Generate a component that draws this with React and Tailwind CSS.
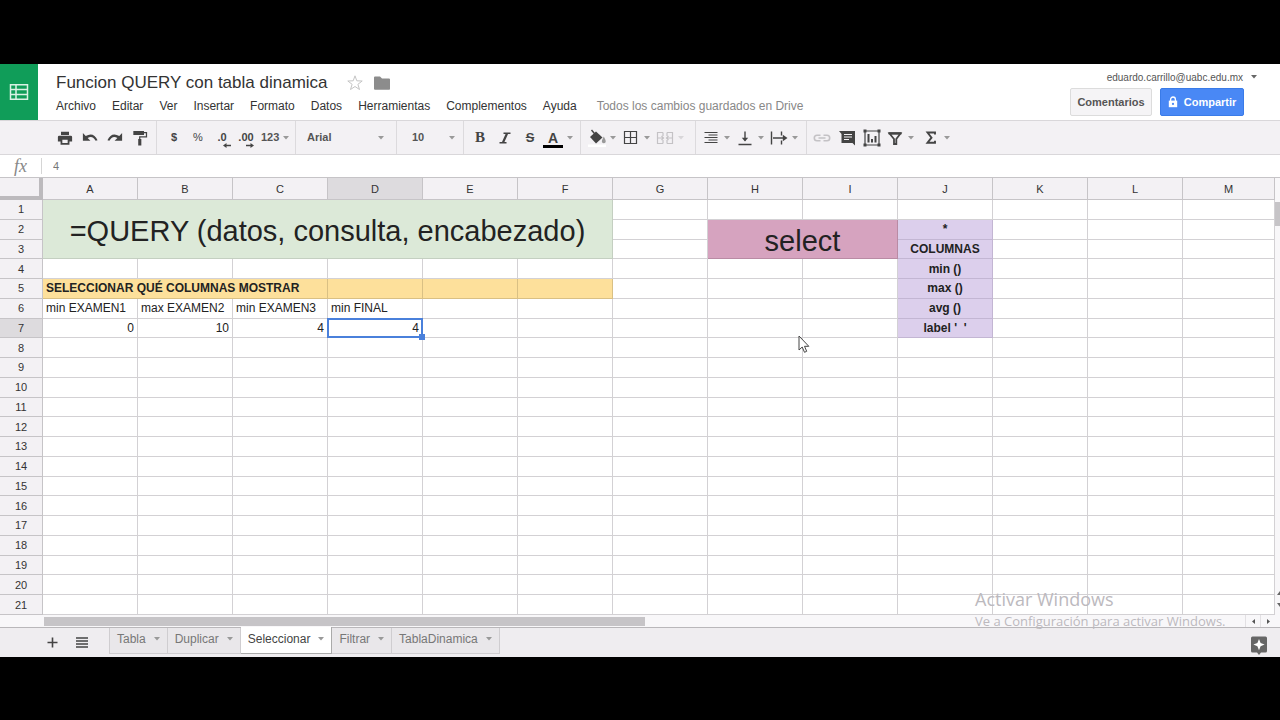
import { useState } from 'react';

const MENUS = ['Archivo', 'Editar', 'Ver', 'Insertar', 'Formato', 'Datos', 'Herramientas', 'Complementos', 'Ayuda'];
const COLS = ['A', 'B', 'C', 'D', 'E', 'F', 'G', 'H', 'I', 'J', 'K', 'L', 'M'];
const ROWS = Array.from({ length: 21 }, (_, i) => i + 1);
const SHEETS = ['Tabla', 'Duplicar', 'Seleccionar', 'Filtrar', 'TablaDinamica'];

const PURPLE = 'bg-[#dccfec] border-[#c3b6d3] text-center font-bold';
const ORANGE = 'bg-[#fde09b] border-[#d9c084]';

// cells that hold something, keyed by address
const CELLS = {
  A1: { text: '=QUERY (datos, consulta, encabezado)', colSpan: 6, rowSpan: 3, cls: 'bg-[#dce9d8] border-[#c4cfc1] pt-1 text-center text-[29px] leading-7' },
  H2: { text: 'select', colSpan: 2, rowSpan: 2, cls: 'bg-[#d6a3bf] border-[#b98ba4] pt-1 text-center text-[29px] leading-7' },
  J2: { text: '*', cls: PURPLE },
  J3: { text: 'COLUMNAS', cls: PURPLE },
  J4: { text: 'min ()', cls: PURPLE },
  J5: { text: 'max ()', cls: PURPLE },
  J6: { text: 'avg ()', cls: PURPLE },
  J7: { text: "label '  '", cls: PURPLE },
  A5: { text: 'SELECCIONAR QUÉ COLUMNAS MOSTRAR', colSpan: 3, cls: `${ORANGE} font-bold` },
  D5: { cls: ORANGE },
  E5: { cls: ORANGE },
  F5: { cls: ORANGE },
  A6: { text: 'min EXAMEN1' },
  B6: { text: 'max EXAMEN2' },
  C6: { text: 'min EXAMEN3' },
  D6: { text: 'min FINAL' },
  A7: { text: '0', cls: 'text-right' },
  B7: { text: '10', cls: 'text-right' },
  C7: { text: '4', cls: 'text-right' },
  D7: { text: '4', cls: 'relative text-right' },
};

// addresses swallowed by a merged cell
const covered = new Set();
Object.entries(CELLS).forEach(([addr, { colSpan = 1, rowSpan = 1 }]) => {
  const c = COLS.indexOf(addr[0]);
  const r = Number(addr.slice(1));
  for (let i = 0; i < rowSpan; i++)
    for (let j = 0; j < colSpan; j++)
      if (i || j) covered.add(COLS[c + j] + (r + i));
});

function Caret({ className = 'text-[#999]' }) {
  return (
    <svg width="6" height="4" viewBox="0 0 6 4" fill="currentColor" className={`shrink-0 ${className}`} aria-hidden="true">
      <path d="M0 0h6L3 3.5z" />
    </svg>
  );
}

function Glyph({ children, size = 18 }) {
  return (
    <svg width={size} height={size} viewBox="0 0 18 18" fill="none" stroke="currentColor" strokeWidth="1.4" className="shrink-0" aria-hidden="true">
      {children}
    </svg>
  );
}

function Tool({ label, caret, disabled, children }) {
  return (
    <button type="button" aria-label={label} disabled={disabled}
      className={`flex h-6 items-center font-bold ${caret ? 'w-[34px] gap-1' : 'w-6 justify-center'} ${disabled ? 'text-[#c4c2c5]' : 'text-[#444]'}`}>
      {children}
      {caret && <Caret className={disabled ? 'text-[#d8d6d9]' : 'text-[#999]'} />}
    </button>
  );
}

function Group({ className, children }) {
  return <div className={`flex h-full shrink-0 items-center border-r border-[#dcdadd] ${className}`}>{children}</div>;
}

function Picker({ label, value, className }) {
  return (
    <div className={`flex items-center ${className}`}>
      <select aria-label={label} defaultValue={value} className="min-w-0 flex-1 appearance-none bg-transparent text-[11px] font-bold text-[#555] outline-none">
        <option>{value}</option>
      </select>
      <Caret />
    </div>
  );
}

function Header() {
  return (
    <header className="flex h-14 bg-white">
      <a href="#inicio" aria-label="Hojas de cálculo" className="flex w-[38px] shrink-0 items-center justify-center bg-[#109d59]">
        <svg width="20" height="18" viewBox="0 0 20 18" fill="none" stroke="#d9f2e4" strokeWidth="1.5" aria-hidden="true">
          <path d="M1.5 1.8h17v14.4h-17zM1.5 6.6h17M1.5 11.4h17M7 1.8v14.4" />
        </svg>
      </a>
      <div className="flex min-w-0 flex-1 flex-col pt-[7px] pl-[18px]">
        <div className="flex h-6 items-center">
          <h1 className="text-[17px] leading-6 text-[#333]">Funcion QUERY con tabla dinamica</h1>
          <button type="button" aria-label="Destacar" className="ml-[19px] text-[#c4c4c4]">
            <svg width="16" height="16" viewBox="0 0 16 16" fill="none" stroke="currentColor" aria-hidden="true">
              <path d="M8 .8l1.800 5 5.400.2-4.300 3.300 1.600 5.200L8 11.500l-4.500 3 1.600-5.200L.8 6l5.400-.2z" />
            </svg>
          </button>
          <button type="button" aria-label="Mover a carpeta" className="ml-[10px] text-[#8c8c8c]">
            <svg width="18" height="16" viewBox="0 0 18 16" fill="currentColor" aria-hidden="true">
              <path d="M2 1.500h5l2 2h7q1 0 1 1V14q0 .8-.8.8H2q-1 0-1-1V2.500q0-1 1-1z" />
            </svg>
          </button>
        </div>
        <nav className="flex h-[22px] items-center gap-4 text-[12px] whitespace-nowrap text-[#333]">
          {MENUS.map(m => <button key={m} type="button">{m}</button>)}
          <span className="ml-1 text-[#888]">Todos los cambios guardados en Drive</span>
        </nav>
      </div>
      <div className="flex shrink-0 flex-col items-end pt-[7px]">
        <button type="button" className="mr-[23px] flex h-3 items-center gap-2 text-[10px] text-[#555]">
          eduardo.carrillo@uabc.edu.mx <Caret className="text-[#666]" />
        </button>
        <div className="mt-[5px] mr-9 flex gap-2 text-[11px] font-bold">
          <button type="button" className="h-7 w-[82px] rounded-xs border border-[#dcdcdc] bg-[#f5f4f6] text-[#555]">Comentarios</button>
          <button type="button" className="flex h-7 w-[84px] items-center justify-center gap-[6px] rounded-xs border border-[#3a7be8] bg-[#4988f5] text-white">
            <svg width="10" height="12" viewBox="0 0 10 12" aria-hidden="true">
              <path d="M2.600 5V3.400a2.400 2.400 0 0 1 4.800 0V5" fill="none" stroke="currentColor" strokeWidth="1.300" />
              <path d="M.8 4.600h8.400v6.600H.8z" fill="currentColor" />
              <circle cx="5" cy="7.900" r="1.100" fill="#4988f5" />
            </svg>
            Compartir
          </button>
        </div>
      </div>
    </header>
  );
}

function Toolbar() {
  return (
    <div className="flex h-[35px] items-center border-y border-[#d9d7da] bg-[#f3f1f4] text-[11px]">
      <Group className="w-[157px] gap-px pl-[53px]">
        <Tool label="Imprimir">
          <Glyph size={16}><path d="M4.500 2h9v3.500h-9zM2.500 6.500h13q1.500 0 1.500 1.500v5h-3v3.500H4V13H1V8q0-1.500 1.500-1.500zM6 11v3.500h6V11z" fill="currentColor" fillRule="evenodd" stroke="none" /></Glyph>
        </Tool>
        <Tool label="Deshacer">
          <Glyph size={16}><path d="M1 3.500v8.500h8.500L6.300 9Q12 5.800 15.300 12.200l2.200-.6Q13 1.800 4.200 6.800z" fill="currentColor" stroke="none" /></Glyph>
        </Tool>
        <Tool label="Rehacer">
          <Glyph size={16}><path d="M17 3.500v8.500H8.500L11.700 9Q6 5.800 2.700 12.200l-2.200-.6Q5 1.800 13.800 6.800z" fill="currentColor" stroke="none" /></Glyph>
        </Tool>
        <Tool label="Copiar formato">
          <Glyph size={16}>
            <path d="M1.500 1h12v4.500h-12zM7 10h3.500v7.500H7z" fill="currentColor" stroke="none" />
            <path d="M13 3h3.300v4.800H8.700V11" />
          </Glyph>
        </Tool>
      </Group>
      <Group className="w-[139px] pl-[5px]">
        <Tool label="Moneda">$</Tool>
        <Tool label="Porcentaje"><span className="font-normal">%</span></Tool>
        <Tool label="Menos decimales">
          <span className="flex flex-col items-end pt-1 leading-3">
            .0
            <svg width="8" height="5" viewBox="0 0 8 5" className="-mr-1" fill="currentColor" aria-hidden="true"><path d="M0 2.500L3.500 0v1.800H8v1.400H3.500V5z" /></svg>
          </span>
        </Tool>
        <Tool label="Más decimales">
          <span className="flex flex-col items-end pt-1 leading-3">
            .00
            <svg width="8" height="5" viewBox="0 0 8 5" fill="currentColor" aria-hidden="true"><path d="M8 2.500L4.500 0v1.800H0v1.400h4.500V5z" /></svg>
          </span>
        </Tool>
        <button type="button" className="ml-[3px] flex items-center gap-1 font-bold text-[#555]">123 <Caret /></button>
      </Group>
      <Group className="w-[101px] pr-3 pl-[11px]"><Picker label="Fuente" value="Arial" className="w-full" /></Group>
      <Group className="w-[67px] pr-2 pl-[15px]"><Picker label="Tamaño" value="10" className="w-full" /></Group>
      <Group className="w-[117px] gap-px pl-1">
        <Tool label="Negrita"><span className="font-[Liberation_Serif,serif] text-[15px]">B</span></Tool>
        <Tool label="Cursiva">
          <Glyph><path d="M7.500 4.300h7M3.500 13.700h7" /><path d="M11 4.500L7 13.500" strokeWidth="2.200" /></Glyph>
        </Tool>
        <Tool label="Tachado"><span className="text-[13px] line-through">S</span></Tool>
        <Tool label="Color del texto" caret>
          <span className="flex w-5 shrink-0 flex-col items-center pt-1 text-[14px] leading-[14px]">
            A
            <span className="h-[3px] w-5 bg-black" />
          </span>
        </Tool>
      </Group>
      <Group className="w-[115px] pl-[7px]">
        <Tool label="Color de relleno" caret>
          <Glyph>
            <path d="M0 15.500h18V18H0z" fill="#fff" stroke="none" />
            <path d="M2 8l6-5.500L14.500 8.500 8 14.500z" fill="currentColor" stroke="none" />
            <path d="M3.500 1l5 6" />
            <path d="M15.800 9q2.500 4.500 0 4.500t0-4.500z" fill="#999" stroke="#999" />
          </Glyph>
        </Tool>
        <Tool label="Bordes" caret><Glyph><path d="M2.500 2.500h12v12h-12zM8.500 2.500v12M2.500 8.500h12" strokeWidth="1.200" /></Glyph></Tool>
        <Tool label="Combinar celdas" caret disabled>
          <Glyph><path d="M7 3.500H1.500v11H7M11 3.500h5.500v11H11M7 3.500V7M7 11v3.500M11 3.500V7M11 11v3.500M2 9h5.500M5.500 7l2 2-2 2M16 9h-5.500M12.500 7l-2 2 2 2" strokeWidth="1.200" /></Glyph>
        </Tool>
      </Group>
      <Group className="w-[111px] pl-[6px]">
        <Tool label="Alineación horizontal" caret><Glyph><path d="M2.500 3.500h13M6.500 6h9M2.500 8.500h13M6.500 11h9M2.500 13.500h13" strokeWidth="1.200" /></Glyph></Tool>
        <Tool label="Alineación vertical" caret>
          <Glyph><path d="M9 2.500v9M2.500 15.500h13" /><path d="M5.800 8.800h6.400L9 12.600z" fill="currentColor" stroke="none" /></Glyph>
        </Tool>
        <Tool label="Ajuste de texto" caret>
          <Glyph><path d="M1.500 2.500v13M11.500 2.500v4M11.500 11.500v4M3 9h12" /><path d="M12.800 5.800v6.400L17.500 9z" fill="currentColor" stroke="none" /></Glyph>
        </Tool>
      </Group>
      <div className="flex items-center gap-px pl-[3px]">
        <Tool label="Insertar enlace" disabled>
          <Glyph><path d="M7.500 6.300H4a2.700 2.700 0 0 0 0 5.400h3.500M10.500 6.300H14a2.700 2.700 0 0 1 0 5.400h-3.500M5.500 9h7" strokeWidth="1.600" /></Glyph>
        </Tool>
        <Tool label="Insertar comentario">
          <Glyph><path d="M1 2h16v14.500L14.500 14H3.500V5z" fill="currentColor" stroke="none" /><path d="M6 5.500h8M6 8h8M6 10.500h5" stroke="#f3f1f4" strokeWidth="1.100" /></Glyph>
        </Tool>
        <Tool label="Insertar gráfico">
          <Glyph><path d="M2 2h14v14H2z" strokeWidth="1.200" /><path d="M5.500 5v8.500M9 10v3.500M12.500 7v6.500" strokeWidth="2" /><path d="M.5.500h3v3h-3zM14.500.500h3v3h-3zM.5 14.500h3v3h-3zM14.500 14.500h3v3h-3z" fill="currentColor" stroke="none" /></Glyph>
        </Tool>
        <div className="flex gap-[2px] pl-px">
          <Tool label="Filtro" caret>
            <Glyph><path d="M3.500 4.500h11L10.300 10v5H8v-5z" strokeWidth="1.800" /><path d="M2.500 3.200h13v2.200h-13z" fill="currentColor" stroke="none" /></Glyph>
          </Tool>
          <Tool label="Funciones" caret>
            <Glyph><path d="M13 5.500V3.500H5.500L9.500 8.700l-4 5H13v-2" strokeWidth="1.900" /></Glyph>
          </Tool>
        </div>
      </div>
    </div>
  );
}

function Grid() {
  return (
    <table className="h-[437px] w-full table-fixed border-separate border-spacing-0 text-[12px] leading-4 text-[#222]">
      <colgroup>
        <col className="w-[43px]" />
        {COLS.map(c => <col key={c} className={c === 'M' ? '' : 'w-[95px]'} />)}
      </colgroup>
      <thead>
        <tr>
          <td className="h-[22px] border-r-4 border-b-4 border-[#bcbabd] bg-[#f3f1f4] p-0" />
          {COLS.map(c => (
            <th key={c} scope="col" className={`border-r border-b border-[#c6c4c7] p-0 text-[11px] font-normal text-[#333] ${c === 'D' ? 'bg-[#dddbde]' : 'bg-[#f3f1f4]'}`}>{c}</th>
          ))}
        </tr>
      </thead>
      <tbody>
        {ROWS.map(r => (
          <tr key={r}>
            <th scope="row" className={`border-r border-b border-[#c6c4c7] p-0 text-[11px] font-normal text-[#333] ${r === 7 ? 'bg-[#dddbde]' : 'bg-[#f3f1f4]'}`}>{r}</th>
            {COLS.map(c => {
              const addr = c + r;
              if (covered.has(addr)) return null;
              const { text, colSpan, rowSpan, cls = '' } = CELLS[addr] || {};
              return (
                <td key={addr} colSpan={colSpan} rowSpan={rowSpan}
                  className={`border-r border-b px-[3px] whitespace-pre ${cls.includes('pt-') ? 'pb-0' : 'py-0'} ${cls.includes('border-') ? '' : 'border-[#d3d1d4]'} ${cls}`}>
                  {text}
                  {addr === 'D7' && (
                    <span className="absolute -top-px -right-px -bottom-px -left-px border-2 border-[#4a80db]">
                      <span className="absolute -right-1 -bottom-1 h-[6px] w-[6px] bg-[#4a80db]" />
                    </span>
                  )}
                </td>
              );
            })}
          </tr>
        ))}
      </tbody>
    </table>
  );
}

function SheetTabs({ active, onSelect }) {
  return (
    <footer className="flex h-[30px] items-start border-t border-[#b9b7ba] bg-[#efedf0]">
      <div className="flex h-full w-[109px] shrink-0 items-center gap-[18px] pl-[47px] text-[#444]">
        <button type="button" aria-label="Añadir hoja">
          <svg width="11" height="11" viewBox="0 0 11 11" stroke="currentColor" strokeWidth="1.600" aria-hidden="true"><path d="M5.500.5v10M.5 5.500h10" /></svg>
        </button>
        <button type="button" aria-label="Todas las hojas">
          <svg width="12" height="11" viewBox="0 0 12 11" stroke="currentColor" strokeWidth="1.600" aria-hidden="true"><path d="M0 1h12M0 4h12M0 7h12M0 10h12" /></svg>
        </button>
      </div>
      {SHEETS.map(s => (
        <button key={s} type="button" onClick={() => onSelect(s)}
          className={`flex items-center gap-2 border-r border-b pr-[7px] pb-[3px] pl-[7px] text-[12px] first-of-type:border-l ${s === active ? '-mt-px h-[27px] border-[#aaa] bg-white text-[#444]' : 'h-[26px] border-[#cfcdd0] bg-[#e9e7ea] text-[#777]'}`}>
          {s} <Caret />
        </button>
      ))}
      <button type="button" aria-label="Explorar" className="mt-2 mr-3 ml-auto">
        <svg width="18" height="20" viewBox="0 0 18 20" aria-hidden="true">
          <path d="M2.500.5h13q1.500 0 1.500 1.500v13q0 1.500-1.500 1.500H11L9 19l-2-2.500H2.500Q1 16.500 1 15V2Q1 .5 2.500.5z" fill="#666" />
          <path d="M9 3l1.600 4 4 1.600-4 1.600L9 14.200l-1.600-4-4-1.600 4-1.600z" fill="#fff" />
        </svg>
      </button>
    </footer>
  );
}

export default function App() {
  const [sheet, setSheet] = useState('Seleccionar');
  const [formula, setFormula] = useState('4');
  return (
    <div className="min-h-screen bg-black pt-16 font-['Liberation_Sans',Arial,sans-serif]">
      <div className="relative overflow-hidden bg-white">
        <Header />
        <Toolbar />
        <div className="flex h-[23px] items-center border-b border-[#c6c4c7] bg-white">
          <label htmlFor="formula" className="w-[42px] shrink-0 border-r border-[#d5d5d5] text-center font-['Liberation_Serif',serif] text-[18px] leading-4 text-[#888] italic">fx</label>
          <input id="formula" value={formula} onChange={e => setFormula(e.target.value)}
            className="h-full min-w-0 flex-1 pl-[11px] text-[11px] text-[#777] outline-none" />
        </div>
        <div className="flex">
          <div className="min-w-0 flex-1"><Grid /></div>
          <div className="flex w-[5px] shrink-0 flex-col justify-between bg-[#f8f7f9] pt-6">
            <div className="h-6 bg-[#c6c4c7]" />
            <div className="flex flex-col items-end gap-2 pb-2 text-[#666]">
              <svg width="3" height="4" viewBox="0 0 3 4" fill="currentColor" aria-hidden="true"><path d="M0 4l3-4v4z" /></svg>
              <svg width="3" height="4" viewBox="0 0 3 4" fill="currentColor" aria-hidden="true"><path d="M0 0l3 4V0z" /></svg>
            </div>
          </div>
        </div>
        <div className="flex h-3 items-center bg-[#f8f7f9] pr-[5px] pl-11">
          <div className="flex-1"><div className="h-[9px] w-1/2 bg-[#c6c4c7]" /></div>
          {['M4 0L1 2.500 4 5z', 'M1 0l3 2.500L1 5z'].map(d => (
            <span key={d} className="flex h-full w-[15px] items-center justify-center border-l border-[#e2e0e3] text-[#555]">
              <svg width="5" height="5" viewBox="0 0 5 5" fill="currentColor" aria-hidden="true"><path d={d} /></svg>
            </span>
          ))}
        </div>
        <SheetTabs active={sheet} onSelect={setSheet} />

        {/* Windows activation notice, floats over the sheet */}
        <div className="pointer-events-none absolute right-[46px] bottom-[26px] w-[259px] font-['Open_Sans','Noto_Sans',sans-serif] whitespace-nowrap text-[#bcb9be]">
          <p className="text-[18px] leading-6">Activar Windows</p>
          <p className="text-[13px] leading-5">Ve a Configuración para activar Windows.</p>
        </div>
        <svg width="12" height="19" viewBox="0 0 12 19" className="pointer-events-none absolute top-[271px] left-[798px]" aria-hidden="true">
          <path d="M1 1v14l3.200-3 2.300 5.300 2.200-1L6.500 11.300h4.300z" fill="#fff" stroke="#444" />
        </svg>
      </div>
    </div>
  );
}
